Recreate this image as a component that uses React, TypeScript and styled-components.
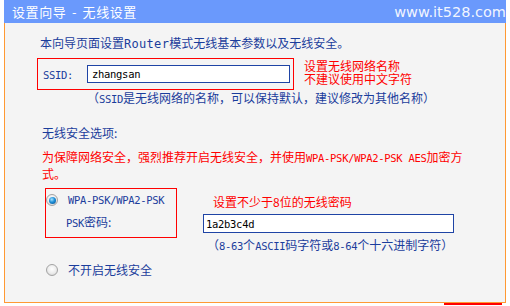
import React from "react";
import styled, { createGlobalStyle } from "styled-components";

const Global = createGlobalStyle`
  html, body { margin: 0; padding: 0; background: #ffffff; }
  body {
    font-family: "Noto Sans CJK SC", "Noto Sans", sans-serif;
    font-size: 12px;
  }
`;

const BLUE = "#1b3d9c";
const RED = "#ff0000";
const MONO = `"DejaVu Sans Mono", "Liberation Mono", monospace`;

const Frame = styled.div`
  margin-left: 4px;
  width: 502px;
`;

const Header = styled.div`
  height: 23px;
  background: #6a99fc;
  display: flex;
  align-items: center;
  justify-content: space-between;
  padding-left: 8px;
  color: #ffffff;
`;

const Title = styled.span`
  font-size: 13px;
  line-height: 23px;
  letter-spacing: 0.6px;
  word-spacing: 2px;
`;

const Watermark = styled.span`
  font-family: "DejaVu Sans", sans-serif;
  font-size: 14.5px;
  line-height: 23px;
  color: rgba(255, 255, 255, 0.92);
  margin-top: 1px;
`;

const Body = styled.div`
  box-sizing: border-box;
  height: 280px;
  background: #f4f4f4;
  border: 1px solid #ff9933;
  border-top: none;
  padding: 12px 0 0 32px;
  display: flex;
  flex-direction: column;
  align-items: flex-start;
`;

const Line = styled.div<{ $tone?: "blue" | "red"; $indent?: number; $gap?: number; $lh?: number }>`
  color: ${(p) => (p.$tone === "red" ? RED : BLUE)};
  margin-left: ${(p) => p.$indent ?? 0}px;
  margin-top: ${(p) => p.$gap ?? 0}px;
  line-height: ${(p) => p.$lh ?? 16}px;
  white-space: nowrap;
`;

const Lat = styled.span<{ $size?: number; $track?: number }>`
  font-family: ${MONO};
  font-size: ${(p) => p.$size ?? 10.5}px;
  letter-spacing: ${(p) => p.$track ?? -0.3}px;
  line-height: 1;
`;

const Row = styled.div<{ $indent?: number; $gap?: number }>`
  display: flex;
  align-items: flex-start;
  margin-left: ${(p) => p.$indent ?? 0}px;
  margin-top: ${(p) => p.$gap ?? 0}px;
`;

const SsidBox = styled.div`
  box-sizing: border-box;
  width: 257px;
  height: 32px;
  border: 1px solid ${RED};
  display: flex;
  align-items: center;
  padding-left: 5px;
`;

const Label = styled.span<{ $width?: number }>`
  color: ${BLUE};
  width: ${(p) => p.$width ?? 44}px;
  flex: none;
  line-height: 16px;
`;

const TextInput = styled.input<{ $width: number; $height: number; $pad?: number }>`
  box-sizing: border-box;
  width: ${(p) => p.$width}px;
  height: ${(p) => p.$height}px;
  border: 1px solid #1f44a5;
  background: #ffffff;
  padding: 0 0 0 ${(p) => p.$pad ?? 4}px;
  margin: 0;
  outline: none;
  font-family: ${MONO};
  font-size: 10.5px;
  letter-spacing: -0.3px;
  color: #000000;
`;

const Note = styled.div<{ $indent?: number; $gap?: number }>`
  color: ${RED};
  line-height: 13px;
  margin-left: ${(p) => p.$indent ?? 0}px;
  margin-top: ${(p) => p.$gap ?? 0}px;
  white-space: nowrap;
`;

const WpaBox = styled.div`
  box-sizing: border-box;
  width: 132px;
  height: 50px;
  border: 1px solid ${RED};
  padding: 5px 0 0 0;
  display: flex;
  flex-direction: column;
`;

const Option = styled.div<{ $indent?: number; $gap?: number }>`
  display: flex;
  align-items: center;
  gap: 10px;
  height: 12px;
  margin-left: ${(p) => p.$indent ?? 0}px;
  margin-top: ${(p) => p.$gap ?? 0}px;
  color: ${BLUE};
  line-height: 16px;
  white-space: nowrap;
`;

const Radio = styled.span<{ $checked?: boolean }>`
  box-sizing: border-box;
  width: 12px;
  height: 12px;
  border-radius: 50%;
  border: 1px solid #a3a3a3;
  background: radial-gradient(circle at 50% 40%, #ffffff 0%, #ececec 55%, #c9c9c9 100%);
  display: inline-flex;
  align-items: center;
  justify-content: center;
  flex: none;

  &::after {
    content: "";
    display: ${(p) => (p.$checked ? "block" : "none")};
    width: 7px;
    height: 7px;
    border-radius: 50%;
    background: radial-gradient(circle at 40% 35%, #a8e4ff 0%, #1d8fd8 45%, #0a4a86 100%);
  }
`;

const Column = styled.div<{ $indent?: number }>`
  display: flex;
  flex-direction: column;
  align-items: flex-start;
  margin-left: ${(p) => p.$indent ?? 0}px;
`;

const Footer = styled.div`
  display: flex;
  justify-content: flex-end;
  padding-right: 4px;
`;

const RedEdge = styled.div`
  width: 58px;
  height: 2px;
  background: ${RED};
`;

export default function App() {
  return (
    <>
      <Global />
      <Frame>
        <Header>
          <Title>设置向导 - 无线设置</Title>
          <Watermark>www.it528.com</Watermark>
        </Header>
        <Body>
          <Line $indent={3}>
            本向导页面设置<Lat $size={12} $track={0.3}>Router</Lat>模式无线基本参数以及无线安全。
          </Line>

          <Row $gap={7}>
            <SsidBox>
              <Label $width={44}>
                <Lat>SSID:</Lat>
              </Label>
              <TextInput $width={203} $height={18} defaultValue="zhangsan" />
            </SsidBox>
            <Note $indent={10} $gap={1}>
              设置无线网络名称
              <br />
              不建议使用中文字符
            </Note>
          </Row>

          <Line $indent={50}>
            （<Lat>SSID</Lat>是无线网络的名称，可以保持默认，建议修改为其他名称）
          </Line>

          <Line $indent={5} $gap={19}>
            无线安全选项:
          </Line>

          <Line $tone="red" $indent={5} $gap={7} $lh={17}>
            为保障网络安全，强烈推荐开启无线安全，并使用<Lat>WPA-PSK/WPA2-PSK AES</Lat>加密方
            <br />
            式。
          </Line>

          <Row $indent={8} $gap={6}>
            <WpaBox>
              <Option>
                <Radio $checked />
                <Lat>WPA-PSK/WPA2-PSK</Lat>
              </Option>
              <Line $indent={20} $gap={8}>
                <Lat>PSK</Lat>密码:
              </Line>
            </WpaBox>
            <Column $indent={26}>
              <Line $tone="red" $indent={10} $gap={6}>
                设置不少于8位的无线密码
              </Line>
              <Row $gap={4}>
                <TextInput $width={251} $height={19} $pad={2} defaultValue="1a2b3c4d" />
              </Row>
              <Line $indent={4} $gap={4}>
                （<Lat>8-63</Lat>个<Lat>ASCII</Lat>码字符或<Lat>8-64</Lat>个十六进制字符）
              </Line>
            </Column>
          </Row>

          <Option $indent={9} $gap={11}>
            <Radio />
            不开启无线安全
          </Option>
        </Body>
        <Footer>
          <RedEdge />
        </Footer>
      </Frame>
    </>
  );
}
